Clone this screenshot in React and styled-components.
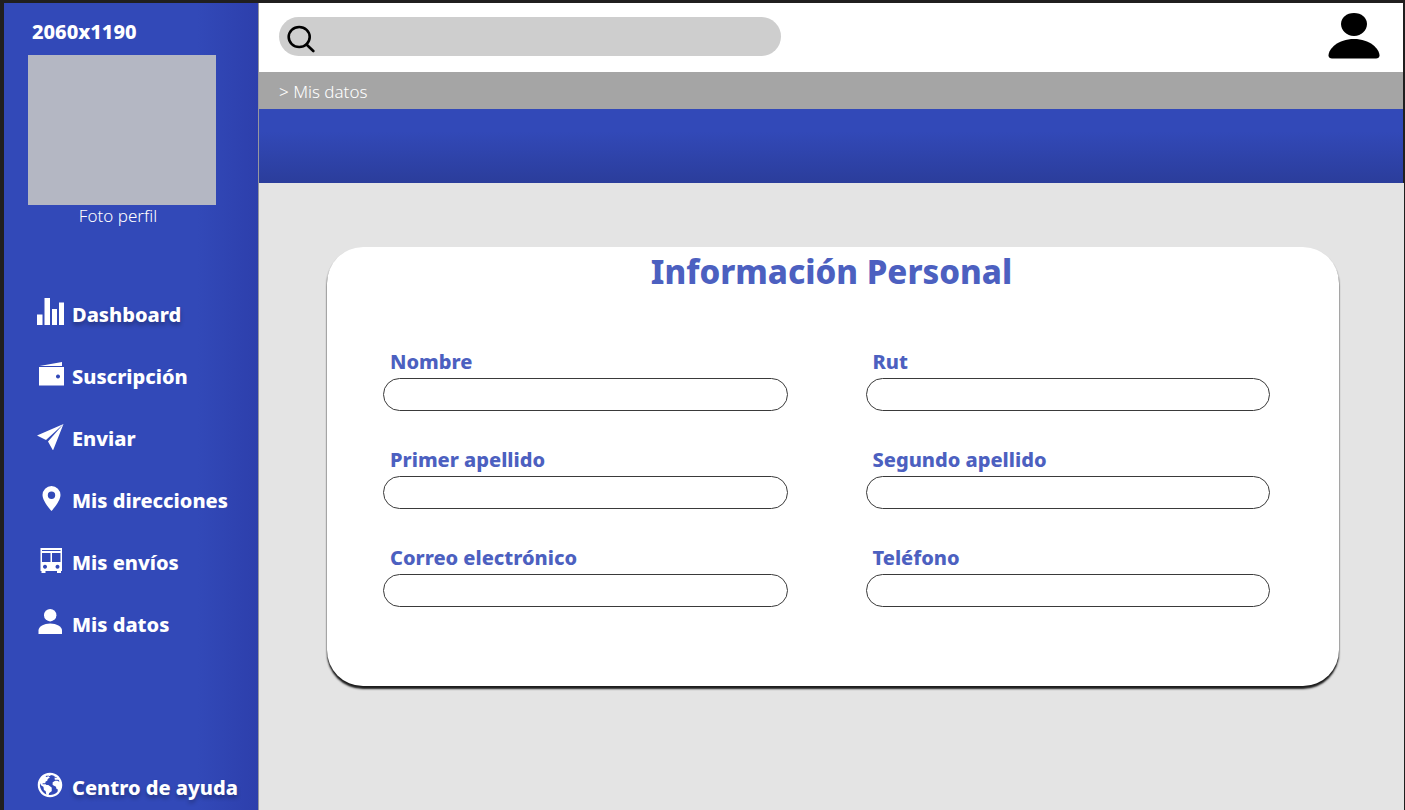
import React from 'react';
import styled, { createGlobalStyle, css } from 'styled-components';
import { IoEarthSharp } from 'react-icons/io5';

const navy = '#3249b8';
const indigo = '#4c60c0';
const frame = '#201f1f';

const GlobalStyle = createGlobalStyle`
  *, *::before, *::after { box-sizing: border-box; }
  body {
    margin: 0;
    background: ${frame};
    font-family: "Noto Sans", "Open Sans", sans-serif;
  }
`;

const Frame = styled.div`
  display: flex;
  min-height: 100vh;
  padding: 3px 1px 0 4px;
  background: ${frame};
`;

const Sidebar = styled.aside`
  display: flex;
  flex-direction: column;
  flex: 0 0 255px;
  border-right: 1px solid #96979f;
  background: linear-gradient(to right, transparent 76%, #2d3fac 100%) ${navy};
  color: #fff;
`;

const Brand = styled.strong`
  padding: 14px 0 0 28px;
  font-size: 20px;
  font-weight: 800;
  line-height: 30px;
`;

const Profile = styled.figure`
  width: 188px;
  margin: 8px 0 0 24px;
`;

const Photo = styled.div`
  height: 150px;
  background: #b4b7c3;
`;

const Caption = styled.figcaption`
  padding-right: 8px;
  font-size: 17px;
  font-weight: 300;
  line-height: 22px;
  text-align: center;
`;

const Nav = styled.nav`
  display: flex;
  flex: 1;
  flex-direction: column;
  padding-top: 57px;
`;

const NavLink = styled.a`
  display: flex;
  align-items: center;
  gap: 8px;
  height: ${({ $last }) => ($last ? 44 : 62)}px;
  margin-top: ${({ $last }) => ($last ? 'auto' : 0)};
  padding-left: 32px;
  color: #fff;
  font-size: 20px;
  font-weight: 800;
  line-height: 28px;
  text-decoration: none;
  white-space: nowrap;
  ${({ $shadow }) => $shadow && css`text-shadow: 0 3px 4px rgba(0, 0, 0, 0.3);`}

  svg {
    flex: none;
    width: 28px;
    height: 28px;
    margin-bottom: 6px;
    fill: currentColor;
  }
`;

const Main = styled.main`
  flex: 1;
  min-width: 0;
  background: #e4e4e4;
`;

const Top = styled.div`
  border-right: 1px solid ${frame};
`;

const Header = styled.header`
  display: flex;
  align-items: flex-start;
  justify-content: space-between;
  height: 69px;
  padding: 10px 23px 0 20px;
  background: #fff;
`;

const Search = styled.label`
  display: flex;
  align-items: center;
  gap: 8px;
  flex: 0 1 502px;
  height: 39px;
  margin-top: 4px;
  padding: 4px 16px 0 8px;
  border-radius: 20px;
  background: #cecece;

  svg { flex: none; width: 28px; height: 28px; }
`;

const SearchInput = styled.input`
  flex: 1;
  min-width: 0;
  border: 0;
  outline: 0;
  background: transparent;
  font: inherit;
`;

const AccountButton = styled.button`
  padding: 0;
  border: 0;
  background: none;
  cursor: pointer;

  svg { display: block; width: 52px; height: 46px; }
`;

const Breadcrumb = styled.div`
  height: 37px;
  padding: 2px 20px 0;
  background: #a5a5a5;
  color: #fff;
  font-size: 17px;
  font-weight: 300;
  line-height: 35px;
`;

const Banner = styled.div`
  height: 74px;
  background: linear-gradient(${navy} 30%, #2b3d9b);
`;

const Card = styled.form`
  margin: 64px 65px 64px 68px;
  padding: 4px 69px 79px 56px;
  border-radius: 36px;
  background: #fff;
  box-shadow: 0 3px 2px #1c1c1c, 0 1px 1px #6a6a6a;
`;

const Title = styled.h1`
  margin: 0 0 53px;
  padding-left: 10px;
  color: ${indigo};
  font-size: 33px;
  font-weight: 800;
  line-height: 42px;
  text-align: center;
`;

const Fields = styled.div`
  display: grid;
  grid-template-columns: 1fr 1fr;
  gap: 33px 78px;
`;

const Field = styled.div`
  display: flex;
  flex-direction: column;
`;

const Label = styled.label`
  padding-left: 7px;
  color: ${indigo};
  font-size: 20px;
  font-weight: 800;
  line-height: 32px;
`;

const TextInput = styled.input`
  width: 100%;
  height: 33px;
  padding: 0 16px;
  border: 1px solid #3a3a3a;
  border-radius: 17px;
  background: #fff;
  font: inherit;
`;

const StatsIcon = () => (
  <svg viewBox="0 0 28 28" aria-hidden="true">
    <path d="M1 16.500h5.500V27H1zM8.500 0H14v27H8.500zM16 11h5v16h-5zM23 4.500h5V27h-5z" />
  </svg>
);

const WalletIcon = () => (
  <svg viewBox="0 0 28 28" aria-hidden="true">
    <path d="M3.500 6 26 2v4z" />
    <path fillRule="evenodd" d="M3 7h25.500v18.500H3zM22 14.500a2 2 0 1 0 .01 0z" />
  </svg>
);

const PlaneIcon = () => (
  <svg viewBox="0 0 28 28" aria-hidden="true">
    <path d="M1 13.500 27.500 2 10 18zM27.500 2 17 28.500l-5-9z" />
  </svg>
);

const PinIcon = () => (
  <svg viewBox="0 0 28 28" aria-hidden="true">
    <path fillRule="evenodd" d="M15.500 2A9 9 0 0 0 6.500 11c0 6.500 9 16 9 16s9-9.500 9-16a9 9 0 0 0-9-9zm0 5.500a3.700 3.700 0 1 1 0 7.400 3.700 3.700 0 0 1 0-7.400z" />
  </svg>
);

const BusIcon = () => (
  <svg viewBox="0 0 28 28" aria-hidden="true">
    <path fillRule="evenodd" d="M4.500 2h21.500V25h-1v2h-4v-2H9.500v2h-4v-2h-1zM6 4v1h18.500V4zM6 7v9h8.500V7zM16 7v9h8.500V7zM9 18.800a2 2 0 1 0 .01 0zM21.500 18.800a2 2 0 1 0 .01 0z" />
  </svg>
);

const PersonIcon = () => (
  <svg viewBox="0 0 28 28" aria-hidden="true">
    <circle cx="14.200" cy="7.200" r="6.200" />
    <path d="M2.500 26v-3.500c0-4 5.500-7 11.700-7S26 18.500 26 22.500V26z" />
  </svg>
);

const SearchIcon = () => (
  <svg viewBox="0 0 28 28" fill="none" stroke="#000" strokeWidth="2.600" strokeLinecap="round" aria-hidden="true">
    <ellipse cx="12.200" cy="12" rx="10.500" ry="10" />
    <path d="m19.500 19.500 6.800 6.500" />
  </svg>
);

const AccountIcon = () => (
  <svg viewBox="0 0 52 46" aria-hidden="true">
    <path d="M26 0c7.500 0 13 4.800 13 11s-5.500 12-13 12-13-5.800-13-12S18.500 0 26 0z" />
    <path d="M4 45.500c-2 0-3.500-1.200-3.500-3C.5 36 10 26 26 26s25.500 10 25.500 16.500c0 1.800-1.500 3-3.500 3z" />
  </svg>
);

const links = [
  { text: 'Dashboard', Icon: StatsIcon, shadow: true },
  { text: 'Suscripción', Icon: WalletIcon },
  { text: 'Enviar', Icon: PlaneIcon },
  { text: 'Mis direcciones', Icon: PinIcon },
  { text: 'Mis envíos', Icon: BusIcon },
  { text: 'Mis datos', Icon: PersonIcon },
  { text: 'Centro de ayuda', Icon: IoEarthSharp, shadow: true, last: true },
];

const fields = [
  { id: 'nombre', label: 'Nombre' },
  { id: 'rut', label: 'Rut' },
  { id: 'primer-apellido', label: 'Primer apellido' },
  { id: 'segundo-apellido', label: 'Segundo apellido' },
  { id: 'correo', label: 'Correo electrónico', type: 'email' },
  { id: 'telefono', label: 'Teléfono', type: 'tel' },
];

export default function App() {
  return (
    <>
      <GlobalStyle />
      <Frame>
        <Sidebar>
          <Brand>2060x1190</Brand>
          <Profile>
            <Photo />
            <Caption>Foto perfil</Caption>
          </Profile>
          <Nav>
            {links.map(({ text, Icon, shadow, last }) => (
              <NavLink key={text} href="#" $shadow={shadow} $last={last}>
                <Icon />
                {text}
              </NavLink>
            ))}
          </Nav>
        </Sidebar>
        <Main>
          <Top>
            <Header>
              <Search>
                <SearchIcon />
                <SearchInput type="search" aria-label="Buscar" />
              </Search>
              <AccountButton type="button" aria-label="Cuenta">
                <AccountIcon />
              </AccountButton>
            </Header>
            <Breadcrumb>&gt; Mis datos</Breadcrumb>
            <Banner />
          </Top>
          <Card>
            <Title>Información Personal</Title>
            <Fields>
              {fields.map(({ id, label, type = 'text' }) => (
                <Field key={id}>
                  <Label htmlFor={id}>{label}</Label>
                  <TextInput id={id} type={type} />
                </Field>
              ))}
            </Fields>
          </Card>
        </Main>
      </Frame>
    </>
  );
}
